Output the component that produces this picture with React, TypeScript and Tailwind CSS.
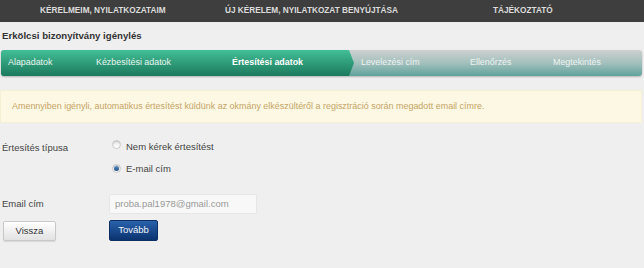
import React from "react";

const font = { fontFamily: '"Liberation Sans", Arial, sans-serif' };

function Radio({ checked }: { checked?: boolean }) {
  return (
    <span className="inline-flex h-[9px] w-[9px] items-center justify-center rounded-full border border-[#c9c9c9] bg-gradient-to-b from-[#e6e6e6] to-[#ffffff] shadow-[inset_0_1px_1px_rgba(0,0,0,0.15)]">
      {checked && <span className="h-[5px] w-[5px] rounded-full bg-gradient-to-b from-[#5b8fc4] to-[#1f4f86]" />}
    </span>
  );
}

export default function App() {
  return (
    <div style={font} className="h-[268px] w-[644px] overflow-hidden bg-[#efefef] text-[#333]">
      {/* Top navigation */}
      <div className="flex h-[22px] items-center bg-[#3e3e3e] text-[8.25px] font-bold text-[#dcdcdc]">
        <span className="ml-[40px] w-[185px]">KÉRELMEIM, NYILATKOZATAIM</span>
        <span className="w-[268px]">ÚJ KÉRELEM, NYILATKOZAT BENYÚJTÁSA</span>
        <span>TÁJÉKOZTATÓ</span>
      </div>

      {/* Title */}
      <div className="ml-[2px] mt-[8px] h-[12px] text-[9.65px] font-bold leading-[12px] text-[#333]">
        Erkölcsi bizonyítvány igénylés
      </div>

      {/* Stepper */}
      <div className="ml-[1px] mt-[8px] flex h-[26px] w-[641px] overflow-hidden rounded-[3px] bg-gradient-to-b from-[#cdd0cf] via-[#a3c0bc] to-[#5fa29c] text-[8.9px] shadow-[0_1px_2px_rgba(0,0,0,0.25)]">
        <div
          className="flex h-full w-[353px] items-center bg-gradient-to-b from-[#42bf96] to-[#1c7a5c] pl-[7px] text-[#e9f6f1]"
          style={{ clipPath: "polygon(0 0, 348px 0, 353px 50%, 348px 100%, 0 100%)" }}
        >
          <span className="w-[88px]">Alapadatok</span>
          <span className="w-[136px]">Kézbesítési adatok</span>
          <span className="font-bold text-white">Értesítési adatok</span>
        </div>
        <div className="flex h-full items-center pl-[7px] text-[#eef4f3]">
          <span className="w-[109px]">Levelezési cím</span>
          <span className="w-[83px]">Ellenőrzés</span>
          <span>Megtekintés</span>
        </div>
      </div>

      {/* Alert */}
      <div className="mt-[14px] flex h-[33px] w-[642px] items-center border border-[#f5efd6] bg-[#fcf8e3] pl-[11px] text-[8.95px] text-[#c6a466]">
        Amennyiben igényli, automatikus értesítést küldünk az okmány elkészültéről a regisztráció során megadott email címre.
      </div>

      {/* Form */}
      <div className="ml-[2px] mt-[16px] text-[9.5px] text-[#444]">
        <div className="flex">
          <div className="w-[110px] pt-[3px] leading-[12px]">Értesítés típusa</div>
          <div className="flex flex-col gap-[10px] pt-[2px]">
            <label className="flex h-[12px] items-center leading-[12px]">
              <span className="-mt-[2px] mr-[5px]"><Radio /></span>
              <span>Nem kérek értesítést</span>
            </label>
            <label className="flex h-[12px] items-center leading-[12px]">
              <span className="-mt-[2px] mr-[5px]"><Radio checked /></span>
              <span>E-mail cím</span>
            </label>
          </div>
        </div>

        <div className="mt-[19px] flex items-center">
          <div className="w-[107px]">Email cím</div>
          <div className="flex h-[20px] w-[148px] items-center rounded-[2px] border border-[#e6e6e6] bg-[#f8f8f8] pl-[5px] text-[#9a9a9a]">
            proba.pal1978@gmail.com
          </div>
        </div>

        <div className="mt-[6px] flex items-start">
          <button className="ml-[1px] mt-[1px] flex h-[20px] w-[53px] items-center justify-center rounded-[2px] border border-[#c8c8c8] bg-gradient-to-b from-[#ffffff] to-[#e2e2e2] text-[#333] shadow-[0_1px_1px_rgba(0,0,0,0.1)]">
            Vissza
          </button>
          <button className="ml-[53px] flex h-[21px] w-[49px] items-center justify-center rounded-[2px] border border-[#0b2e63] bg-gradient-to-b from-[#2a62ad] to-[#0a336f] text-[#f0f4fb]">
            Tovább
          </button>
        </div>
      </div>
    </div>
  );
}
